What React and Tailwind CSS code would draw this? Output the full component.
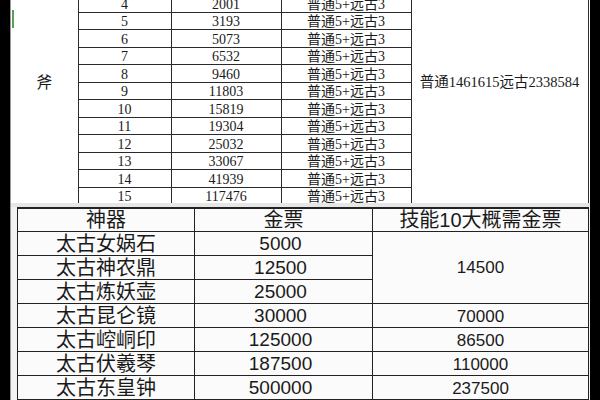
import React from 'react';

const levels = [
  [4, 2001], [5, 3193], [6, 5073], [7, 6532], [8, 9460], [9, 11803],
  [10, 15819], [11, 19304], [12, 25032], [13, 33067], [14, 41939], [15, 117476],
];

const artifacts = [
  ['太古女娲石', '5000'],
  ['太古神农鼎', '12500'],
  ['太古炼妖壶', '25000'],
  ['太古昆仑镜', '30000', '70000'],
  ['太古崆峒印', '125000', '86500'],
  ['太古伏羲琴', '187500', '110000'],
  ['太古东皇钟', '500000', '237500'],
];

const serif = { fontFamily: '"Liberation Serif", "Noto Sans CJK SC", serif' };
const sans = { fontFamily: '"Liberation Sans", "Noto Sans CJK SC", sans-serif' };

function App() {
  return (
    <div className="w-[600px] h-[400px] bg-black flex overflow-hidden">
      <div className="w-[10px] shrink-0" />
      <div className="relative w-[580px] shrink-0 bg-[#f3f3f3] border-l border-[#9a9a9a] flex flex-col text-[#1a1a1a]">
        {/* green selection mark */}
        <div className="absolute left-[1px] top-[10px] w-[2px] h-[18px] bg-[#5aa05a]" />

        {/* upgrade cost table */}
        <div className="h-[204px] overflow-hidden bg-white">
          <table className="-mt-[6px] border-collapse table-fixed w-[577px]" style={serif}>
            <colgroup>
              <col className="w-[67px]" />
              <col className="w-[93px]" />
              <col className="w-[110px]" />
              <col className="w-[130px]" />
              <col className="w-[177px]" />
            </colgroup>
            <tbody>
              {levels.map(([lv, gold], i) => (
                <tr key={lv}>
                  {i === 0 && (
                    <td rowSpan={12} className="p-0 pb-[34px] text-center align-middle text-[16px] border-0">
                      斧
                    </td>
                  )}
                  <td className="h-[17.5px] p-0 border border-[#2a2a2a] text-center align-bottom text-[14px] leading-[15px]">{lv}</td>
                  <td className="h-[17.5px] p-0 border border-[#2a2a2a] text-center align-bottom text-[14px] leading-[15px]">{gold}</td>
                  <td className="h-[17.5px] p-0 border border-[#2a2a2a] text-center align-bottom text-[14px] leading-[15px]">普通5+远古3</td>
                  {i === 0 && (
                    <td rowSpan={12} className="p-0 pb-[34px] border border-[#2a2a2a] text-center align-middle text-[14.5px]">
                      普通1461615远古2338584
                    </td>
                  )}
                </tr>
              ))}
            </tbody>
          </table>
        </div>

        <div className="h-[4px] bg-[#e6e6e6]" />

        {/* artifact table */}
        <div className="pl-[6px]">
          <table className="border-collapse table-fixed w-[571px] bg-[#fbfbfb] border-t-2 border-[#222]" style={sans}>
            <colgroup>
              <col className="w-[177px]" />
              <col className="w-[178px]" />
              <col className="w-[216px]" />
            </colgroup>
            <thead>
              <tr>
                <th className="h-[24px] p-0 border border-[#222] font-normal text-[20px] leading-[22px] align-bottom">神器</th>
                <th className="h-[24px] p-0 border border-[#222] font-normal text-[20px] leading-[22px] align-bottom">金票</th>
                <th className="h-[24px] p-0 border border-[#222] font-normal text-[20px] leading-[22px] align-bottom">技能10大概需金票</th>
              </tr>
            </thead>
            <tbody>
              {artifacts.map(([name, cost, skill], i) => (
                <tr key={name}>
                  <td className="h-[24px] p-0 border border-[#222] text-center align-bottom text-[20px] leading-[22px]">{name}</td>
                  <td className="h-[24px] p-0 pr-[6px] border border-[#222] text-center align-bottom text-[19px] leading-[22px]">{cost}</td>
                  {i === 0 && (
                    <td rowSpan={3} className="p-0 border border-[#222] text-center align-middle text-[17px]">14500</td>
                  )}
                  {skill && (
                    <td className="h-[24px] p-0 border border-[#222] text-center align-bottom text-[17px] leading-[21px]">{skill}</td>
                  )}
                </tr>
              ))}
            </tbody>
          </table>
        </div>
      </div>
    </div>
  );
}

export default App;
